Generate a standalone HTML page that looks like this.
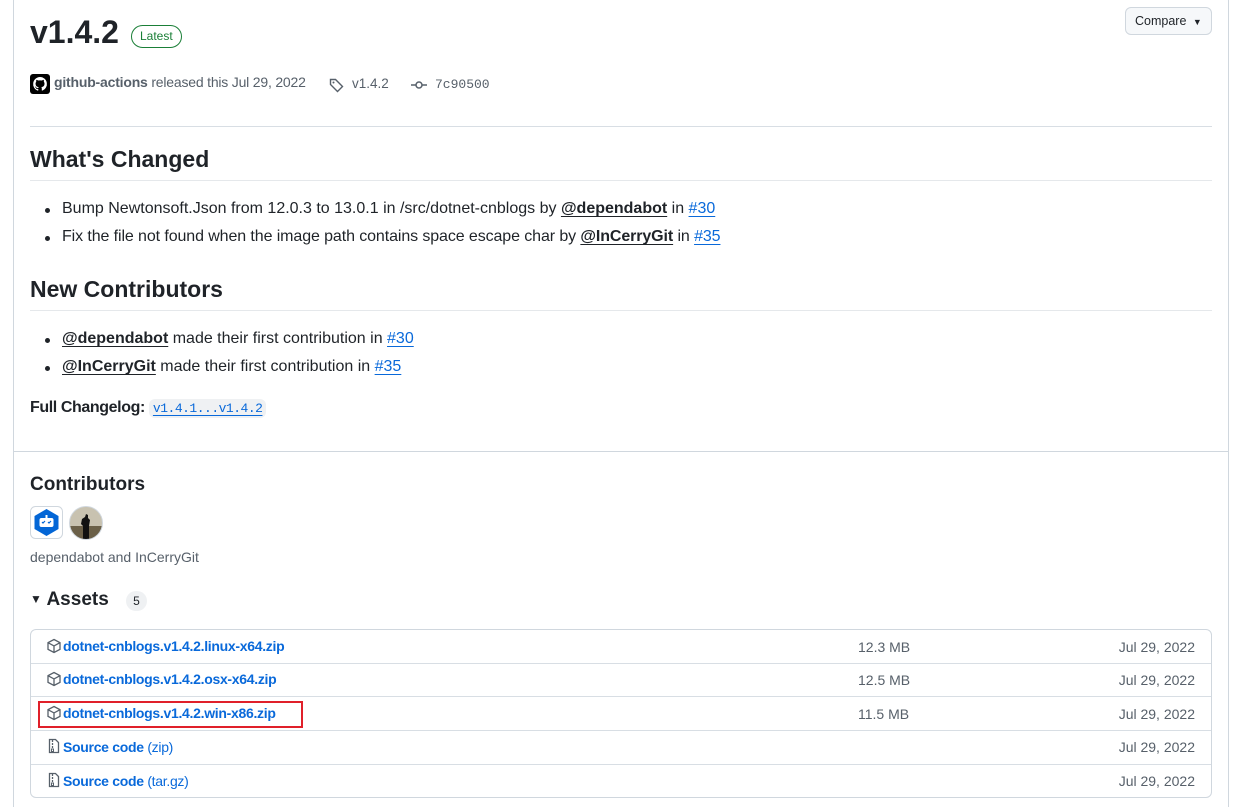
<!DOCTYPE html>
<html><head><meta charset="utf-8"><style>
*{box-sizing:border-box;margin:0;padding:0}
html,body{width:1257px;height:807px;overflow:hidden}
body{background:#fff;font-family:"Liberation Sans",sans-serif;color:#1f2328;position:relative}
.a{position:absolute;white-space:nowrap}
.t{font-size:16px}
.bl{color:#0969da}
.ul{text-decoration:underline;text-underline-offset:3px}
.bu{font-weight:bold;text-decoration:underline;text-underline-offset:3px}
.hr{position:absolute;height:1px;background:#d8dee4}
.mono{font-family:"Liberation Mono",monospace}
.dot{position:absolute;width:5px;height:5px;border-radius:50%;background:#1f2328}
.row{position:absolute;left:31px;width:1180px;height:34px;border-top:1px solid #d8dee4}
.h{font-weight:bold}
.d{position:absolute;right:62px;font-size:14px;color:#57606a;white-space:nowrap}
</style></head><body>
<div style="position:absolute;left:13px;top:-5px;width:1216px;height:830px;border:1px solid #d0d7de;border-radius:6px"></div>
<div class="hr" style="left:14px;top:451px;width:1214px;background:#d0d7de"></div>

<div class="a" style="left:30px;top:14px;font-size:32px;font-weight:bold">v1.4.2</div>
<div class="a" style="left:131px;top:25px;height:23px;padding:0 8px;border:1px solid #1a7f37;border-radius:12px;color:#1a7f37;font-size:12px;line-height:21px">Latest</div>
<div class="a" style="left:1125px;top:7px;width:87px;height:28px;border:1px solid #d0d7de;border-radius:6px;background:#f6f8fa;font-size:12.5px;line-height:26px;padding-left:9px">Compare <span style="font-size:9px;margin-left:3px">▼</span></div>

<svg class="a" style="left:30px;top:74px" width="20" height="20" viewBox="0 0 20 20"><rect width="20" height="20" rx="3" fill="#000"/><path fill="#fff" d="M10 3a7 7 0 0 0-2.2 13.6c.35.07.48-.15.48-.34v-1.2c-1.950.42-2.36-.94-2.36-.94-.32-.81-.78-1.03-.78-1.03-.64-.43.05-.42.05-.42.7.05 1.07.72 1.07.72.63 1.07 1.64.76 2.040.58.06-.45.24-.76.45-.94-1.55-.18-3.18-.78-3.18-3.46 0-.76.27-1.390.72-1.88-.07-.18-.31-.89.07-1.85 0 0 .59-.19 1.930.72a6.6 6.6 0 0 1 3.5 0c1.34-.91 1.93-.72 1.93-.72.38.96.14 1.67.07 1.85.45.49.72 1.12.72 1.88 0 2.69-1.64 3.28-3.2 3.45.25.22.48.65.48 1.3v1.93c0 .19.13.41.48.34A7 7 0 0 0 10 3z"/></svg>
<div class="a" style="left:54px;top:74px;font-size:14px;color:#57606a;letter-spacing:-0.2px"><b style="color:#57606a">github-actions</b> released this Jul 29, 2022</div>
<svg class="a" style="left:329px;top:77px" width="16" height="16" viewBox="0 0 16 16"><path fill="none" stroke="#57606a" stroke-width="1.4" d="M1.5 2.5v5l7 7 5-5-7-7z"/><circle cx="4.5" cy="5.5" r="1" fill="#57606a"/></svg>
<div class="a" style="left:352px;top:76px;font-size:13.5px;color:#57606a">v1.4.2</div>
<svg class="a" style="left:410px;top:77px" width="18" height="16" viewBox="0 0 18 16"><circle cx="9" cy="8" r="3" fill="none" stroke="#57606a" stroke-width="1.5"/><path stroke="#57606a" stroke-width="1.5" d="M1 8h5M12 8h5"/></svg>
<div class="a mono" style="left:435px;top:77px;font-size:13px;color:#57606a">7c90500</div>

<div class="hr" style="left:30px;top:126px;width:1182px"></div>
<div class="a h" style="left:30px;top:146px;font-size:23px">What's Changed</div>
<div class="hr" style="left:30px;top:180px;width:1182px;background:#e5e8eb"></div>
<div class="dot" style="left:45px;top:208px"></div>
<div class="a t" style="left:62px;top:200px">Bump Newtonsoft.Json from 12.0.3 to 13.0.1 in /src/dotnet-cnblogs by <span class="bu">@dependabot</span> in <span class="bl ul">#30</span></div>
<div class="dot" style="left:45px;top:236px"></div>
<div class="a t" style="left:62px;top:228px;letter-spacing:-0.1px">Fix the file not found when the image path contains space escape char by <span class="bu">@InCerryGit</span> in <span class="bl ul">#35</span></div>

<div class="a h" style="left:30px;top:276px;font-size:23px">New Contributors</div>
<div class="hr" style="left:30px;top:310px;width:1182px;background:#e5e8eb"></div>
<div class="dot" style="left:45px;top:338px"></div>
<div class="a t" style="left:62px;top:330px"><span class="bu">@dependabot</span> made their first contribution in <span class="bl ul">#30</span></div>
<div class="dot" style="left:45px;top:366px"></div>
<div class="a t" style="left:62px;top:358px"><span class="bu">@InCerryGit</span> made their first contribution in <span class="bl ul">#35</span></div>

<div class="a t" style="left:30px;top:399px;font-weight:bold;letter-spacing:-0.4px">Full Changelog: <span class="mono bl ul" style="font-weight:normal;letter-spacing:-0.5px;background:#eff1f3;border-radius:6px;padding:2px 4px;font-size:13px">v1.4.1...v1.4.2</span></div>

<div class="a h" style="left:30px;top:474px;font-size:19px">Contributors</div>
<svg class="a" style="left:30px;top:506px" width="33" height="33" viewBox="0 0 33 33"><rect x=".5" y=".5" width="32" height="32" rx="5" fill="#fff" stroke="#d0d7de"/><path fill="#0366d6" d="M16.5 3l12 7v13l-12 7-12-7V10z"/><rect x="9.5" y="12" width="14" height="9" rx="2" fill="#fff"/><rect x="15.5" y="9" width="2" height="3" fill="#fff"/><path stroke="#0366d6" stroke-width="1.2" fill="none" d="M12 16l1 1 2-2M18 16l1 1 2-2"/></svg>
<svg class="a" style="left:69px;top:506px" width="34" height="34" viewBox="0 0 34 34"><defs><clipPath id="c"><circle cx="17" cy="17" r="16.5"/></clipPath></defs><g clip-path="url(#c)"><rect width="34" height="20" fill="#c8c2b0"/><rect y="20" width="34" height="14" fill="#6b6048"/><path fill="#111" d="M14 34v-14l-2-2 1-5 3-2 1-3 2 1 0 3 2 2-1 6v14z"/></g><circle cx="17" cy="17" r="16.5" fill="none" stroke="#d0d7de"/></svg>
<div class="a" style="left:30px;top:549px;font-size:14px;color:#57606a">dependabot and InCerryGit</div>

<div class="a h" style="left:30px;top:589px;font-size:19px"><span style="font-size:12px;vertical-align:2px">▼</span> Assets</div>
<div class="a" style="left:126px;top:591px;width:21px;height:20px;border-radius:10px;background:#eff1f3;font-size:12px;text-align:center;line-height:20px">5</div>

<div style="position:absolute;left:30px;top:629px;width:1182px;height:169px;border:1px solid #d0d7de;border-radius:6px"></div>
<div class="row" style="top:663px"></div><div class="row" style="top:696px"></div><div class="row" style="top:730px"></div><div class="row" style="top:764px"></div>

<svg width="0" height="0" style="position:absolute"><defs>
<g id="pk"><path fill="none" stroke="#57606a" stroke-width="1.3" d="M8 1.5l6 3.2v6.6l-6 3.2-6-3.2V4.7zM2 4.7l6 3.2 6-3.2M8 7.9v6.6"/></g>
<g id="zp"><path fill="none" stroke="#57606a" stroke-width="1.3" d="M3.5 1.5h6l3 3v10h-9zM6.5 2v2M6.5 5v2M6.5 8v2"/><rect x="5.5" y="11" width="2" height="2.5" fill="none" stroke="#57606a" stroke-width="1"/></g>
</defs></svg>
<svg class="a" style="left:46px;top:638px" width="16" height="16"><use href="#pk"/></svg>
<div class="a" style="left:63px;top:638px;font-size:14px;font-weight:bold;color:#0969da;letter-spacing:-0.3px">dotnet-cnblogs.v1.4.2.linux-x64.zip</div>
<div class="a" style="left:858px;top:639px;font-size:14px;color:#57606a">12.3 MB</div>
<div class="d" style="top:639px">Jul 29, 2022</div>

<svg class="a" style="left:46px;top:671px" width="16" height="16"><use href="#pk"/></svg>
<div class="a" style="left:63px;top:671px;font-size:14px;font-weight:bold;color:#0969da;letter-spacing:-0.3px">dotnet-cnblogs.v1.4.2.osx-x64.zip</div>
<div class="a" style="left:858px;top:672px;font-size:14px;color:#57606a">12.5 MB</div>
<div class="d" style="top:672px">Jul 29, 2022</div>

<div class="a" style="left:38px;top:701px;width:265px;height:27px;border:2px solid #e0202a"></div>
<svg class="a" style="left:46px;top:705px" width="16" height="16"><use href="#pk"/></svg>
<div class="a" style="left:63px;top:705px;font-size:14px;font-weight:bold;color:#0969da;letter-spacing:-0.3px">dotnet-cnblogs.v1.4.2.win-x86.zip</div>
<div class="a" style="left:858px;top:706px;font-size:14px;color:#57606a">11.5 MB</div>
<div class="d" style="top:706px">Jul 29, 2022</div>

<svg class="a" style="left:46px;top:738px" width="16" height="16"><use href="#zp"/></svg>
<div class="a" style="left:63px;top:739px;font-size:14px;color:#0969da;letter-spacing:-0.3px"><b>Source code</b> (zip)</div>
<div class="d" style="top:739px">Jul 29, 2022</div>

<svg class="a" style="left:46px;top:772px" width="16" height="16"><use href="#zp"/></svg>
<div class="a" style="left:63px;top:773px;font-size:14px;color:#0969da;letter-spacing:-0.3px"><b>Source code</b> (tar.gz)</div>
<div class="d" style="top:773px">Jul 29, 2022</div>
</body></html>
